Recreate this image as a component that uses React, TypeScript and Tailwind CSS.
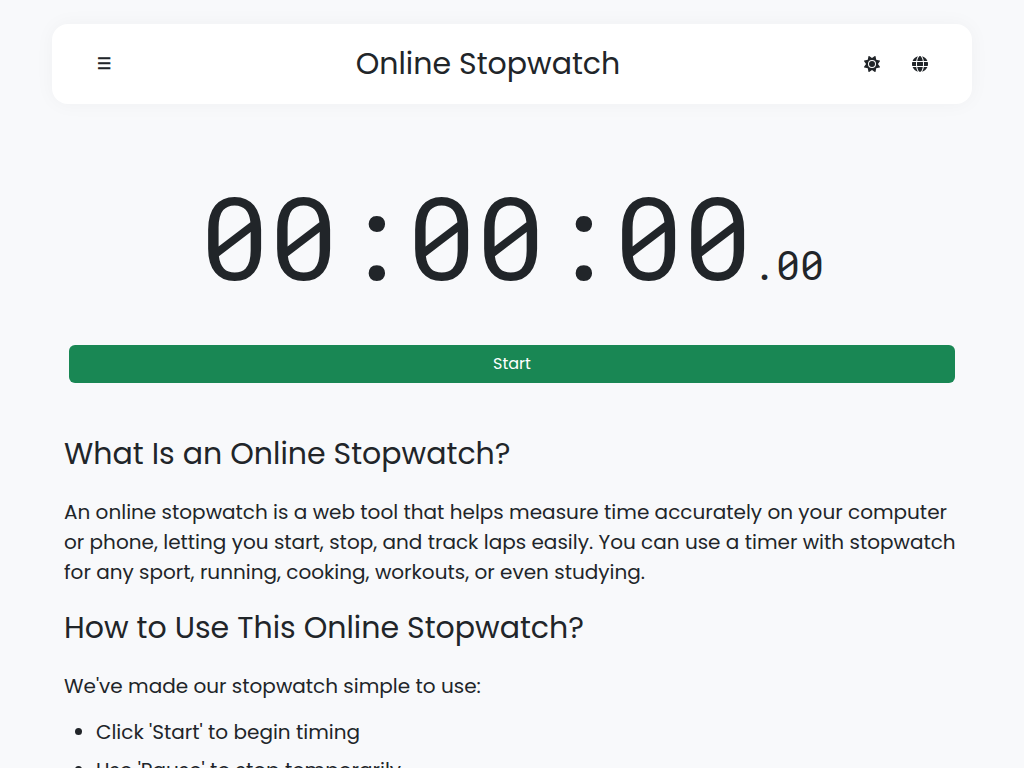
import React, { useEffect, useState } from "react";
import { FaGlobe, FaSun } from "react-icons/fa6";

const steps = ["Click 'Start' to begin timing", "Use 'Pause' to stop temporarily"];

function pad(value: number) {
  return String(value).padStart(2, "0");
}

function IconButton({ label, children }: { label: string; children: React.ReactNode }) {
  return (
    <button
      type="button"
      aria-label={label}
      className="flex h-10 w-12 items-center justify-center cursor-pointer"
    >
      {children}
    </button>
  );
}

function App() {
  const [running, setRunning] = useState(false);
  const [elapsed, setElapsed] = useState(0);

  useEffect(() => {
    if (!running) return;
    const startedAt = Date.now() - elapsed;
    const timer = setInterval(() => setElapsed(Date.now() - startedAt), 10);
    return () => clearInterval(timer);
  }, [running]);

  const hours = pad(Math.floor(elapsed / 3600000));
  const minutes = pad(Math.floor(elapsed / 60000) % 60);
  const seconds = pad(Math.floor(elapsed / 1000) % 60);
  const hundredths = pad(Math.floor(elapsed / 10) % 100);

  return (
    <div className="min-h-screen bg-[#f8f9fb] px-13 pt-6 pb-12 font-['Poppins','Inter',sans-serif] text-[#212529]">
      <header className="flex h-20 items-center justify-between rounded-2xl bg-white px-7 shadow-[0_0_20px_rgba(0,0,0,0.04)]">
        <IconButton label="Menu">
          <span className="text-base font-bold">☰</span>
        </IconButton>
        <h1 className="text-[30px] leading-[38px]">Online Stopwatch</h1>
        <div className="flex">
          <IconButton label="Theme">
            <FaSun size={16} />
          </IconButton>
          <IconButton label="Language">
            <FaGlobe size={16} />
          </IconButton>
        </div>
      </header>

      <main>
        <div
          role="timer"
          className="mt-14 flex items-baseline justify-center text-[115px] leading-[150px] font-['Roboto_Mono','Inter',monospace]"
        >
          <span>
            {hours}:{minutes}:{seconds}
          </span>
          <span className="text-[40px] leading-10">.{hundredths}</span>
        </div>

        <div className="mt-[35px] px-[17px]">
          <button
            type="button"
            className="h-[38px] w-full rounded-md bg-[#198754] text-base text-white cursor-pointer"
            onClick={() => setRunning(!running)}
          >
            {running ? "Pause" : "Start"}
          </button>
        </div>

        <article className="mt-13 px-3 text-xl leading-[30px]">
          <h2 className="mb-6 text-[30px] leading-[38px]">What Is an Online Stopwatch?</h2>
          <p className="mb-[22px]">
            An online stopwatch is a web tool that helps measure time accurately on your computer or
            phone, letting you start, stop, and track laps easily. You can use a timer with
            stopwatch for any sport, running, cooking, workouts, or even studying.
          </p>
          <h2 className="mb-6 text-[30px] leading-[38px]">How to Use This Online Stopwatch?</h2>
          <p className="mb-4">We've made our stopwatch simple to use:</p>
          <ul className="list-disc space-y-2 pl-8">
            {steps.map((step) => (
              <li key={step}>{step}</li>
            ))}
          </ul>
        </article>
      </main>
    </div>
  );
}

export default App;
